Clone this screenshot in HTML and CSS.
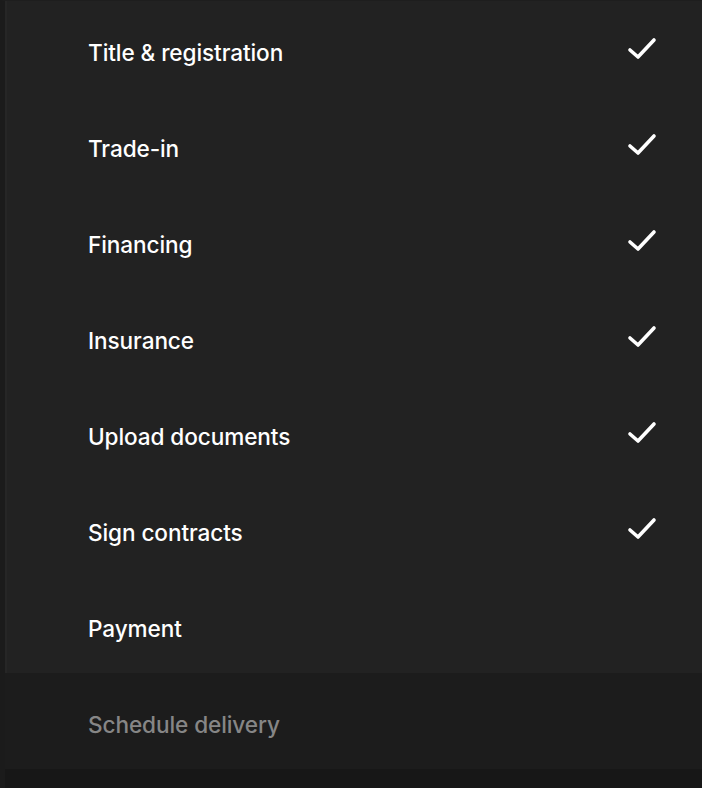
FILE: index.html
```html
<!DOCTYPE html>
<html lang="en">
<head>
    <meta charset="UTF-8" />
    <title>Order Steps</title>
    <link rel="stylesheet" href="styles.css">
</head>
<body>
<div class="drawer">
    <ul class="steps">
        <li class="step done"><span>Title &amp; registration</span>
            <svg class="check" viewBox="0 0 32 24"><path d="M4 13l8 7L28 3" /></svg></li>
        <li class="step done"><span>Trade-in</span>
            <svg class="check" viewBox="0 0 32 24"><path d="M4 13l8 7L28 3" /></svg></li>
        <li class="step done"><span>Financing</span>
            <svg class="check" viewBox="0 0 32 24"><path d="M4 13l8 7L28 3" /></svg></li>
        <li class="step done"><span>Insurance</span>
            <svg class="check" viewBox="0 0 32 24"><path d="M4 13l8 7L28 3" /></svg></li>
        <li class="step done"><span>Upload documents</span>
            <svg class="check" viewBox="0 0 32 24"><path d="M4 13l8 7L28 3" /></svg></li>
        <li class="step done"><span>Sign contracts</span>
            <svg class="check" viewBox="0 0 32 24"><path d="M4 13l8 7L28 3" /></svg></li>
        <li class="step"><span>Payment</span></li>
        <li class="step locked"><span>Schedule delivery</span></li>
    </ul>
    <div class="filler"></div>
</div>
</body>
</html>
```

FILE: styles.css
```css
html, body {
    margin: 0;
    height: 100%;
}
body {
    font-family: Inter, "Noto Sans", sans-serif;
    background: #171717;
    color: #fff;
}
.drawer {
    min-height: 100%;
    display: flex;
    flex-direction: column;
    background: #222;
    border-left: 5px solid #1b1b1b;
    box-shadow: inset 2px 0 0 #262626;
    border-top: 1px solid #1e1e1e;
    box-sizing: border-box;
}
.steps {
    list-style: none;
    margin: 0;
    padding: 0;
}
.step {
    height: 96px;
    display: flex;
    align-items: center;
    justify-content: space-between;
    padding: 0 44px 0 83px;
    font-size: 22.6px;
    font-weight: 500;
    letter-spacing: -0.1px;
}
.step span {
    padding-top: 6px;
}
.step .check {
    width: 32px;
    height: 24px;
    fill: none;
    stroke: #fff;
    stroke-width: 3.6;
    stroke-linecap: round;
    stroke-linejoin: round;
}
.step.locked {
    background: #1c1c1c;
    color: #868686;
}
.filler {
    flex: 1;
    background: #171717;
}
```
